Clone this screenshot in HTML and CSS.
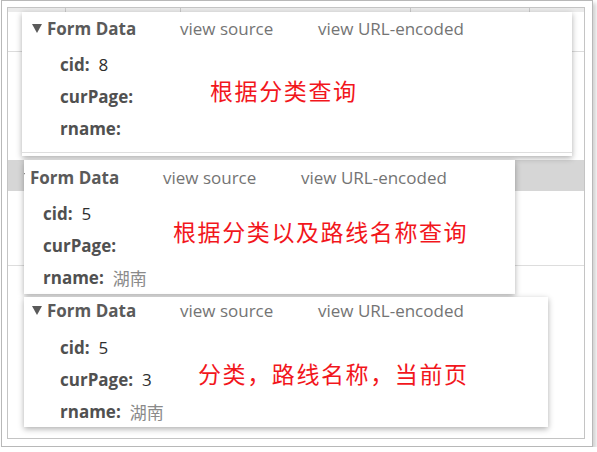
FILE: index.html
```html
<!DOCTYPE html>
<html lang="zh-CN">
<head>
<meta charset="utf-8">
<title>Form Data</title>
<link rel="stylesheet" href="styles.css">
</head>
<body>
<div class="frame">
  <div class="canvas">
    <section class="panel panel-a">
      <div class="head">
        <svg class="tri" width="10" height="9" viewBox="0 0 10 9"><polygon points="0,0 10,0 5,9" fill="#5a5a5a"/></svg>
        <span class="title">Form Data</span>
        <span class="link">view source</span>
        <span class="link">view URL-encoded</span>
      </div>
      <div class="rows">
        <div class="row"><span class="key">cid:</span><span class="val">8</span></div>
        <div class="row"><span class="key">curPage:</span></div>
        <div class="row"><span class="key">rname:</span></div>
      </div>
      <div class="foot"></div>
      <p class="note">根据分类查询</p>
    </section>
    <section class="panel panel-b">
      <div class="head">
        <svg class="tri" width="10" height="9" viewBox="0 0 10 9"><polygon points="0,0 10,0 5,9" fill="#5a5a5a"/></svg>
        <span class="title">Form Data</span>
        <span class="link">view source</span>
        <span class="link">view URL-encoded</span>
      </div>
      <div class="rows">
        <div class="row"><span class="key">cid:</span><span class="val">5</span></div>
        <div class="row"><span class="key">curPage:</span></div>
        <div class="row"><span class="key">rname:</span><span class="val zh">湖南</span></div>
      </div>
      <p class="note">根据分类以及路线名称查询</p>
    </section>
    <section class="panel panel-c">
      <div class="head">
        <svg class="tri" width="10" height="9" viewBox="0 0 10 9"><polygon points="0,0 10,0 5,9" fill="#5a5a5a"/></svg>
        <span class="title">Form Data</span>
        <span class="link">view source</span>
        <span class="link">view URL-encoded</span>
      </div>
      <div class="rows">
        <div class="row"><span class="key">cid:</span><span class="val">5</span></div>
        <div class="row"><span class="key">curPage:</span><span class="val">3</span></div>
        <div class="row"><span class="key">rname:</span><span class="val zh">湖南</span></div>
      </div>
      <p class="note">分类，路线名称，当前页</p>
    </section>
  </div>
</div>
</body>
</html>
```

FILE: styles.css
```css
html, body {
  margin: 0;
  padding: 0;
  background: #fff;
}

body {
  font-family: "Open Sans", "Noto Sans", "Noto Sans CJK SC", sans-serif;
}

.frame {
  box-sizing: border-box;
  margin-left: 1px;
  width: 592px;
  height: 447px;
  padding: 6px 7px 7px 5px;
  border: 1px solid #b8b8b8;
  background: #fff;
  box-shadow: 3px 3px 4px rgba(0, 0, 0, 0.18);
}

.canvas {
  box-sizing: border-box;
  height: 432px;
  border: 1px solid #c4c4c4;
  overflow: hidden;
  background:
    linear-gradient(#c8c8c8, #c8c8c8) 57px 0 / 1px 4px no-repeat,
    linear-gradient(#c8c8c8, #c8c8c8) 172px 0 / 1px 4px no-repeat,
    linear-gradient(#c8c8c8, #c8c8c8) 402px 0 / 1px 4px no-repeat,
    linear-gradient(#c8c8c8, #c8c8c8) 521px 0 / 1px 4px no-repeat,
    linear-gradient(#ebebeb, #ebebeb) 0 0 / 100% 4px no-repeat,
    linear-gradient(#dcdcdc, #dcdcdc) 0 43px / 100% 1px no-repeat,
    linear-gradient(#d6d6d6, #d6d6d6) 0 152px / 100% 31px no-repeat,
    linear-gradient(#dddddd, #dddddd) 0 257px / 100% 1px no-repeat,
    #fff;
}

.panel {
  position: relative;
  box-sizing: border-box;
  background: #fff;
  overflow: hidden;
  box-shadow: 0 2px 6px rgba(0, 0, 0, 0.32);
}

.panel-a {
  margin: 4px 0 0 14px;
  width: 550px;
  height: 144px;
  padding-left: 10px;
}

.panel-b {
  margin: 4px 0 0 16px;
  width: 491px;
  height: 134px;
  padding-top: 1px;
  padding-left: 0;
}

.panel-b .head {
  margin-left: -9px;
}

.panel-b .rows {
  padding-left: 19px;
}

.panel-c {
  margin: 3px 0 0 16px;
  width: 524px;
  height: 130px;
  padding-left: 8px;
}

.head {
  display: flex;
  align-items: center;
  height: 32px;
  margin-bottom: 4px;
  font-size: 17px;
  white-space: nowrap;
}

.panel-c .head {
  height: 26px;
  margin-bottom: 8px;
}

.tri {
  flex: none;
  width: 10px;
  margin-right: 5px;
}

.title {
  width: 133px;
  font-weight: 700;
  color: #5a5a5a;
}

.link {
  width: 138px;
  color: #747474;
}

.rows {
  padding-left: 28px;
}

.row {
  display: flex;
  align-items: center;
  height: 32px;
  font-size: 17px;
  white-space: nowrap;
}

.key {
  font-weight: 700;
  color: #505050;
}

.val {
  margin-left: 9px;
  color: #2e2e2e;
}

.val.zh {
  color: #8a8a8a;
  font-family: "Noto Sans CJK SC", sans-serif;
  font-size: 17px;
}

.foot {
  position: absolute;
  left: 0;
  right: 0;
  bottom: 3px;
  border-top: 1px solid #dedede;
}

.note {
  position: absolute;
  margin: 0;
  font-family: "Noto Sans CJK SC", sans-serif;
  font-size: 23px;
  line-height: 30px;
  letter-spacing: 1.6px;
  font-weight: 400;
  color: #f2161c;
  white-space: nowrap;
}

.panel-a .note {
  left: 188px;
  top: 63px;
}

.panel-b .note {
  left: 149px;
  top: 56px;
}

.panel-c .note {
  left: 174px;
  top: 61px;
}
```
